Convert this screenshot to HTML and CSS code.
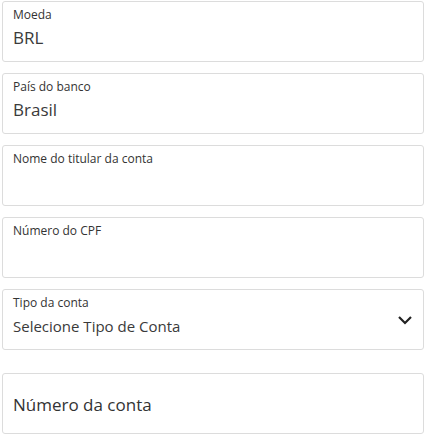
FILE: index.html
```html
<!DOCTYPE html>
<html lang="pt">
<head>
<meta charset="utf-8">
<link rel="stylesheet" href="styles.css">
</head>
<body>
<div class="form">
  <div class="field">
    <div class="label">Moeda</div>
    <div class="value">BRL</div>
  </div>
  <div class="field">
    <div class="label">País do banco</div>
    <div class="value">Brasil</div>
  </div>
  <div class="field">
    <div class="label">Nome do titular da conta</div>
    <div class="value"></div>
  </div>
  <div class="field">
    <div class="label">Número do CPF</div>
    <div class="value"></div>
  </div>
  <div class="field select">
    <div class="select-text">
      <div class="label">Tipo da conta</div>
      <div class="value">Selecione Tipo de Conta</div>
    </div>
    <svg class="chevron" width="16" height="10" viewBox="0 0 16 10"><path d="M2 2 L8 8 L14 2" fill="none" stroke="#222" stroke-width="2.2"/></svg>
  </div>
  <div class="field placeholder-field">
    <div class="placeholder">Número da conta</div>
  </div>
</div>
</body>
</html>
```

FILE: styles.css
```css
html, body {
  margin: 0;
  padding: 0;
  background: #ffffff;
}
body {
  font-family: "Open Sans", "Noto Sans", sans-serif;
  color: #333333;
}
.form {
  display: flex;
  flex-direction: column;
  gap: 11px;
  padding: 1px 1px 0 2px;
}
.field {
  box-sizing: border-box;
  height: 61px;
  border: 1.5px solid #dcdcdc;
  border-radius: 3px;
  padding: 5px 10px 0 10px;
  background: #fff;
}
.label {
  font-size: 12px;
  line-height: 16px;
  color: #333;
}
.value {
  font-size: 17px;
  line-height: 24px;
  margin-top: 3px;
  color: #3a3a3a;
  min-height: 24px;
}
.select {
  display: flex;
  align-items: center;
  justify-content: space-between;
  padding-right: 10px;
}
.select .select-text {
  align-self: flex-start;
}
.select .value {
  font-size: 15px;
}
.chevron {
  display: block;
  margin-top: -5px;
}
.placeholder-field {
  margin-top: 12px;
  display: flex;
  align-items: center;
  padding-top: 0;
}
.placeholder {
  font-size: 17px;
  color: #333;
  margin-top: 1px;
}
```
